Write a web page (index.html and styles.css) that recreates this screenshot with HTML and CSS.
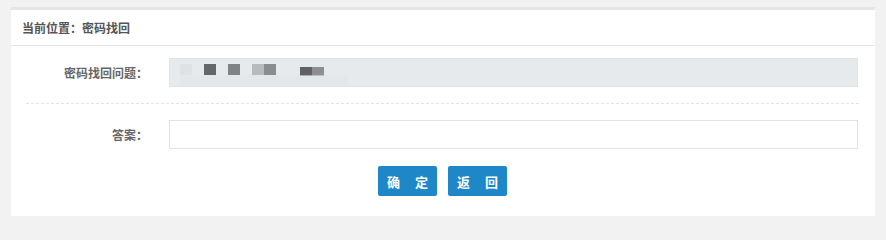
FILE: index.html
```html
<!DOCTYPE html>
<html lang="zh-CN">
<head>
<meta charset="utf-8">
<title>密码找回</title>
<link rel="stylesheet" href="styles.css">
</head>
<body>
<div class="page">
  <div class="panel">
    <div class="panel-head">当前位置：密码找回</div>
    <div class="form">
      <div class="row">
        <label class="label">密码找回问题：</label>
        <div class="input input-readonly">
          <span class="px p1"></span>
          <span class="px p2"></span>
          <span class="px p3"></span>
          <span class="px p4"></span>
          <span class="px p5"></span>
          <span class="px p6"></span>
          <span class="px p7"></span>
          <span class="faint"></span>
        </div>
      </div>
      <div class="divider"></div>
      <div class="row">
        <label class="label">答案：</label>
        <div class="input"></div>
      </div>
      <div class="actions">
        <button class="btn">确 定</button>
        <button class="btn">返 回</button>
      </div>
    </div>
  </div>
</div>
</body>
</html>
```

FILE: styles.css
```css
html, body {
  margin: 0;
  padding: 0;
  background: #f2f2f2;
  font-family: "Noto Sans CJK SC", "Noto Sans", sans-serif;
}
.page {
  padding: 7px 11px 0 11px;
  width: 864px;
}
.panel {
  background: #fff;
  border-top: 3px solid #e6e6e6;
  height: 206px;
}
.panel-head {
  height: 35px;
  line-height: 35px;
  border-bottom: 1px solid #e6e6e6;
  padding-left: 11px;
  font-size: 12px;
  font-weight: bold;
  color: #555;
}
.form {
  padding: 12px 17px 0 0;
}
.row {
  display: grid;
  grid-template-columns: 137px 689px;
  column-gap: 21px;
  align-items: center;
}
.label {
  text-align: right;
  font-size: 12px;
  font-weight: bold;
  color: #666;
  letter-spacing: 0;
}
.input {
  height: 27px;
  border: 1px solid #e2e2e2;
  background: #fff;
  position: relative;
}
.input-readonly {
  background: #e7eaed;
  border-color: #e0e3e6;
}
.px {
  position: absolute;
  top: 5px;
  width: 12px;
  height: 11px;
}
.p1 { left: 10px; background: #dfe1e3; }
.p2 { left: 34px; background: #646668; }
.p3 { left: 58px; background: #808284; }
.p4 { left: 82px; background: #b8babb; }
.p5 { left: 94px; background: #8a8c8e; }
.p6 { left: 130px; top: 8px; height: 9px; background: #5f6163; }
.p7 { left: 142px; top: 8px; height: 9px; background: #8c8e90; }
.faint {
  position: absolute;
  left: 10px;
  top: 16px;
  width: 168px;
  height: 11px;
  background: #e2e4e6;
  opacity: 0.6;
}
.divider {
  margin: 16px 0 16px 15px;
  border-top: 1px dashed #e3e3e3;
  width: 833px;
}
.actions {
  display: flex;
  justify-content: center;
  gap: 11px;
  margin-top: 17px;
  padding-left: 16px;
}
.btn {
  width: 59px;
  height: 30px;
  border: none;
  border-radius: 2px;
  background: #1e87c8;
  color: #fff;
  font-family: "Noto Sans CJK SC", "Noto Sans", sans-serif;
  font-size: 13px;
  font-weight: bold;
  letter-spacing: 6px;
  padding: 0 0 0 6px;
}
```
